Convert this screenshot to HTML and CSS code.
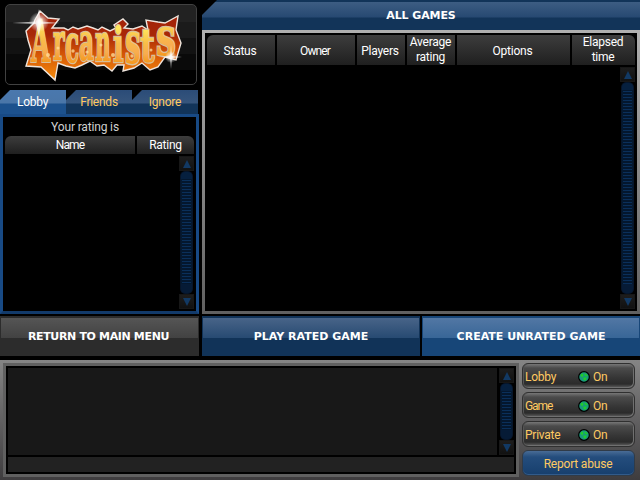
FILE: index.html
```html
<!DOCTYPE html>
<html lang="en">
<head>
<meta charset="utf-8">
<title>Arcanists</title>
<link rel="stylesheet" href="styles.css">
</head>
<body>
<div class="app">
  <main class="top">
    <aside class="side">
      <div class="logo">
        <svg width="190" height="79" viewBox="6 5 190 79">
          <defs>
            <linearGradient id="back" x1="0" y1="0" x2="0" y2="1">
              <stop offset="0" stop-color="#a02008"/><stop offset=".35" stop-color="#a82808"/><stop offset=".65" stop-color="#d85a06"/><stop offset="1" stop-color="#f48c0c"/>
            </linearGradient>
            <linearGradient id="gold" gradientUnits="objectBoundingBox" x1="0" y1="0.2" x2="0" y2="0.8">
              <stop offset="0" stop-color="#ffe65c"/><stop offset=".45" stop-color="#f8bc48"/><stop offset=".75" stop-color="#f8ac50"/><stop offset="1" stop-color="#f59a20"/>
            </linearGradient>
            <radialGradient id="glow"><stop offset="0" stop-color="#fff"/><stop offset=".3" stop-color="#fff" stop-opacity=".75"/><stop offset="1" stop-color="#fff" stop-opacity="0"/></radialGradient>
          </defs>
          <path d="M40 11L48 18L59 19L52 28L64 28L68 30L73 27L78 29L87 26L93 28L98 30L102 27L110 31L116 28L114 25L123 19L128 24L124 28L133 29L142 26L148 30L146 20L158 22L165 23L178 16L176 30L181 43L176 60L165 57L158 67L150 70L142 63L134 68L123 71L124 65L117 65L112 71L104 65L97 66L90 61L82 65L75 68L66 66L58 63L55 80L41 67L26 66L31 50L28 40L26 31L34 23L35 20Z" fill="url(#back)" stroke="#eee4dc" stroke-width="1.4" stroke-linejoin="miter"/>
          <g class="word" fill="url(#gold)" stroke="#d8bf98" stroke-width="1.3" paint-order="stroke">
            <text transform="translate(31 62) scale(.76 1.6)" font-size="36">A</text>
            <text transform="translate(53 60) scale(.9 1.95)" font-size="27">r</text>
            <text transform="translate(65 62) scale(.95 1.95)" font-size="27">c</text>
            <text transform="translate(79 60) scale(.95 1.95)" font-size="27">a</text>
            <text transform="translate(95 61) scale(.88 1.95)" font-size="27">n</text>
            <text transform="translate(113 62) scale(1.15 1.8)" font-size="27">i</text>
            <text transform="translate(125 63) scale(1.15 2.15)" font-size="27">s</text>
            <text transform="translate(140 62) scale(1.3 1.75)" font-size="27">t</text>
            <text transform="translate(156 55) scale(1.45 1.95)" font-size="27">s</text>
          </g>
          <g fill="#ffe1a0" opacity=".75"><circle cx="48" cy="55" r="2"/><circle cx="58" cy="48" r="1.5"/><circle cx="73" cy="51" r="1.7"/><circle cx="87" cy="52" r="1.6"/><circle cx="101" cy="45" r="1.5"/><circle cx="113" cy="55" r="2"/><circle cx="132" cy="56" r="1.7"/><circle cx="151" cy="50" r="1.5"/></g>
          <circle cx="39" cy="22" r="10" fill="url(#glow)"/><path d="M12 23L36 21.5L39 9L41 21.5L60 23L41 24L39 37L36 24Z" fill="#fff" opacity=".65"/>
          <circle cx="171" cy="57" r="6" fill="url(#glow)"/><path d="M160 57L170 56L171 45L172 56L182 57L172 58L171 69L170 58Z" fill="#fff" opacity=".65"/>
        </svg>
      </div>
      <nav class="tabs">
        <div class="tab active"><span>Lobby</span></div>
        <div class="tab"><span>Friends</span></div>
        <div class="tab"><span>Ignore</span></div>
      </nav>
      <section class="players">
        <p class="rating">Your rating is</p>
        <div class="cols side-cols"><div class="tight">Name</div><div>Rating</div></div>
        <div class="scroll"><i class="arrow up"></i><i class="thumb"></i><i class="arrow down"></i></div>
      </section>
    </aside>
    <section class="games">
      <header class="title"><span>ALL GAMES</span></header>
      <div class="frame">
        <div class="cols game-cols">
          <div>Status</div><div class="tight">Owner</div><div>Players</div><div class="two">Average<br>rating</div><div>Options</div><div class="two">Elapsed<br>time</div>
        </div>
        <div class="scroll"><i class="arrow up"></i><i class="thumb"></i><i class="arrow down"></i></div>
      </div>
    </section>
  </main>
  <div class="actions">
    <div class="action menu"><span>RETURN TO MAIN MENU</span></div>
    <div class="action rated"><span>PLAY RATED GAME</span></div>
    <div class="action unrated"><span>CREATE UNRATED GAME</span></div>
  </div>
  <footer class="bottom">
    <div class="chat">
      <div class="log"><div class="lines"></div><div class="scroll"><i class="arrow up"></i><i class="thumb"></i><i class="arrow down"></i></div></div>
      <div class="entry"></div>
    </div>
    <div class="filters">
      <div class="pill"><span class="name">Lobby</span><svg class="orb" viewBox="0 0 11 11"><circle cx="5.5" cy="5.5" r="4.9" fill="#1a9a7c" stroke="#000" stroke-width="1.1"/><path d="M2 4L4 2L5 4L4 6ZM6 2L9 4L8 5L6 4ZM5 6L8 6L7 9L5 8Z" fill="#1fce29"/></svg><span>On</span></div>
      <div class="pill"><span class="name game">Game</span><svg class="orb" viewBox="0 0 11 11"><circle cx="5.5" cy="5.5" r="4.9" fill="#1a9a7c" stroke="#000" stroke-width="1.1"/><path d="M2 4L4 2L5 4L4 6ZM6 2L9 4L8 5L6 4ZM5 6L8 6L7 9L5 8Z" fill="#1fce29"/></svg><span>On</span></div>
      <div class="pill"><span class="name">Private</span><svg class="orb" viewBox="0 0 11 11"><circle cx="5.5" cy="5.5" r="4.9" fill="#1a9a7c" stroke="#000" stroke-width="1.1"/><path d="M2 4L4 2L5 4L4 6ZM6 2L9 4L8 5L6 4ZM5 6L8 6L7 9L5 8Z" fill="#1fce29"/></svg><span>On</span></div>
      <div class="pill report">Report abuse</div>
    </div>
  </footer>
</div>
</body>
</html>
```
FILE: styles.css
```css
* { box-sizing: border-box; }
body {
  margin: 0;
  background: #000;
  color: #fff;
  font: 12px/15px Roboto, "Liberation Sans", sans-serif;
  letter-spacing: -0.25px;
}
.app { width: 640px; height: 480px; overflow: hidden; display: flex; flex-direction: column; }
.top { height: 314px; display: flex; gap: 3px; }
.side { width: 199px; display: flex; flex-direction: column; }

.logo {
  height: 81px; width: 192px; margin: 4px 0 5px 5px; overflow: hidden;
  border: 1px solid #414141; border-radius: 5px;
  background: linear-gradient(#222 0 17px, #1b1b1b 17px 33px, #121212 33px 49px, #0a0a0a 49px 65px, #000 65px);
}
.logo svg { display: block; }
.word { font-family: "DejaVu Serif Condensed", "DejaVu Serif", serif; font-weight: bold; letter-spacing: 0; }

.tabs { display: flex; height: 24px; }
.tab {
  width: 66px; height: 24px; color: #ffca62; text-align: center; line-height: 24px;
  background: linear-gradient(#2b4c78, #36557c 13px, #123459 14px);
  clip-path: polygon(10px 0, 100% 0, 100% 100%, 0 100%, 0 10px);
}
.tab.active {
  padding-right: 1px; color: #fff;
  background: linear-gradient(#4a78ae, #4a76a8 13px, #1c518d 14px);
}

.players {
  height: 200px; padding: 2px; border: 3px solid #184a85;
  border-bottom-color: #123a6a;
  display: flex; flex-direction: column;
}
.rating { margin: 0; height: 17px; padding-right: 29px; line-height: 16px; text-align: center; color: #d0d0d0; letter-spacing: -0.15px; }
.cols { display: grid; gap: 2px; text-align: center; }
.cols > div { display: flex; align-items: center; justify-content: center; padding-top: 1px; background: linear-gradient(#3d3d3d, #1f1f1f); }
.cols > div.tight { letter-spacing: -0.9px; }
.cols > div:first-child { border-top-left-radius: 6px; }
.cols > div:last-child { border-top-right-radius: 6px; }
.side-cols { grid-template-columns: 130px 57px; height: 18px; }

.scroll { width: 15px; align-self: flex-end; flex: 1; display: flex; flex-direction: column; }
.players .scroll { margin: 2px 0 0; }
.arrow { height: 15px; display: flex; align-items: center; justify-content: center; background: linear-gradient(#1d1d1d, #111); border: 1px solid #171717; }
.arrow::before { content: ""; border: 4px solid transparent; border-bottom: 8px solid #123963; border-top: 0; }
.arrow.down::before { border-top: 8px solid #123963; border-bottom: 0; }
.thumb {
  flex: 1; margin: 0 1px; border: 1px solid #06152a; border-radius: 5px;
  background:
    linear-gradient(#06203f, #06203f) top / 100% 7px no-repeat,
    linear-gradient(#061b36, #061b36) bottom / 100% 9px no-repeat,
    linear-gradient(90deg, #041930 1px, transparent 1px 10px, #041930 10px),
    repeating-linear-gradient(#04172e 0 2px, #0a2f5a 2px 3px);
}

.games { width: 438px; display: flex; flex-direction: column; }
.title, .action span { font: bold 11px/15px "DejaVu Sans", sans-serif; }
.title {
  height: 30px; text-align: center; line-height: 31px; letter-spacing: -0.1px;
  background: linear-gradient(#123459 2px, #3d5d83 2px, #274972 17px, #123459 18px);
  clip-path: polygon(15px 0, 100% 0, 100% 100%, 0 100%, 0 15px);
}
.frame {
  height: 284px; padding: 2px; border: 3px solid #888;
  border-image: linear-gradient(#b0b0b0, #606060) 3;
  display: flex; flex-direction: column;
}
.game-cols { height: 30px; flex: none; grid-template-columns: 68px 78px 48px 48px 113px 63px; }
.game-cols > div { white-space: nowrap; padding-right: 2px; padding-top: 2px; }
.game-cols > div.two { padding-right: 1px; padding-top: 0; }
.frame .scroll { margin-top: 2px; }

.actions { height: 46px; padding: 2px 0 4px; display: flex; }
.action { width: 218px; flex: none; display: flex; align-items: center; justify-content: center; }
.action span { white-space: nowrap; letter-spacing: 0; }
.action.menu { width: 199px; margin-right: 3px; padding-right: 2px; background: linear-gradient(#555, #424242) 1px 2px / 197px 20px no-repeat #2c2c2c; }
.action.menu span { letter-spacing: -0.35px; }
.rated { background: linear-gradient(#486488, #274a72) 1px 2px / 216px 20px no-repeat #113358; }
.unrated { margin-left: 2px; background: linear-gradient(#5277a4, #386697) 1px 2px / 216px 20px no-repeat #174678; }

.bottom {
  height: 120px; padding: 3px 5px 3px 3px; display: flex; gap: 3px;
  background: linear-gradient(#858585, #3e3c3e);
}
.chat {
  width: 516px; height: 114px; padding: 2px; display: flex; flex-direction: column; gap: 2px;
  border: 3px solid #606060; background: #000;
}
.log { height: 87px; display: flex; gap: 2px; }
.log .scroll { flex: none; align-self: stretch; }
.lines { width: 489px; background: #181818; }
.entry { height: 15px; background: #222; }
.filters { width: 113px; display: flex; flex-direction: column; gap: 3px; }
.pill {
  height: 26px; padding: 2px 3px 0 2px; display: flex; align-items: center; color: #ffca62;
  border: 1px solid #303030; border-radius: 6px;
  background: linear-gradient(#777 0, #4b4b4b 4px, #353535 14px, #2b2b2b 20px, #555 23px);
  box-shadow: inset 1px 0 #555, inset -1px -1px #707070;
}
.name { width: 53px; }
.name.game { letter-spacing: -1.1px; }
.orb { width: 12px; height: 12px; margin-right: 3px; }
.report { justify-content: center; letter-spacing: -0.2px; background: linear-gradient(#496c96, #244d7d 6px, #173f6d); border-color: #303b48; box-shadow: inset 0 -1px #315b8b; }
```
